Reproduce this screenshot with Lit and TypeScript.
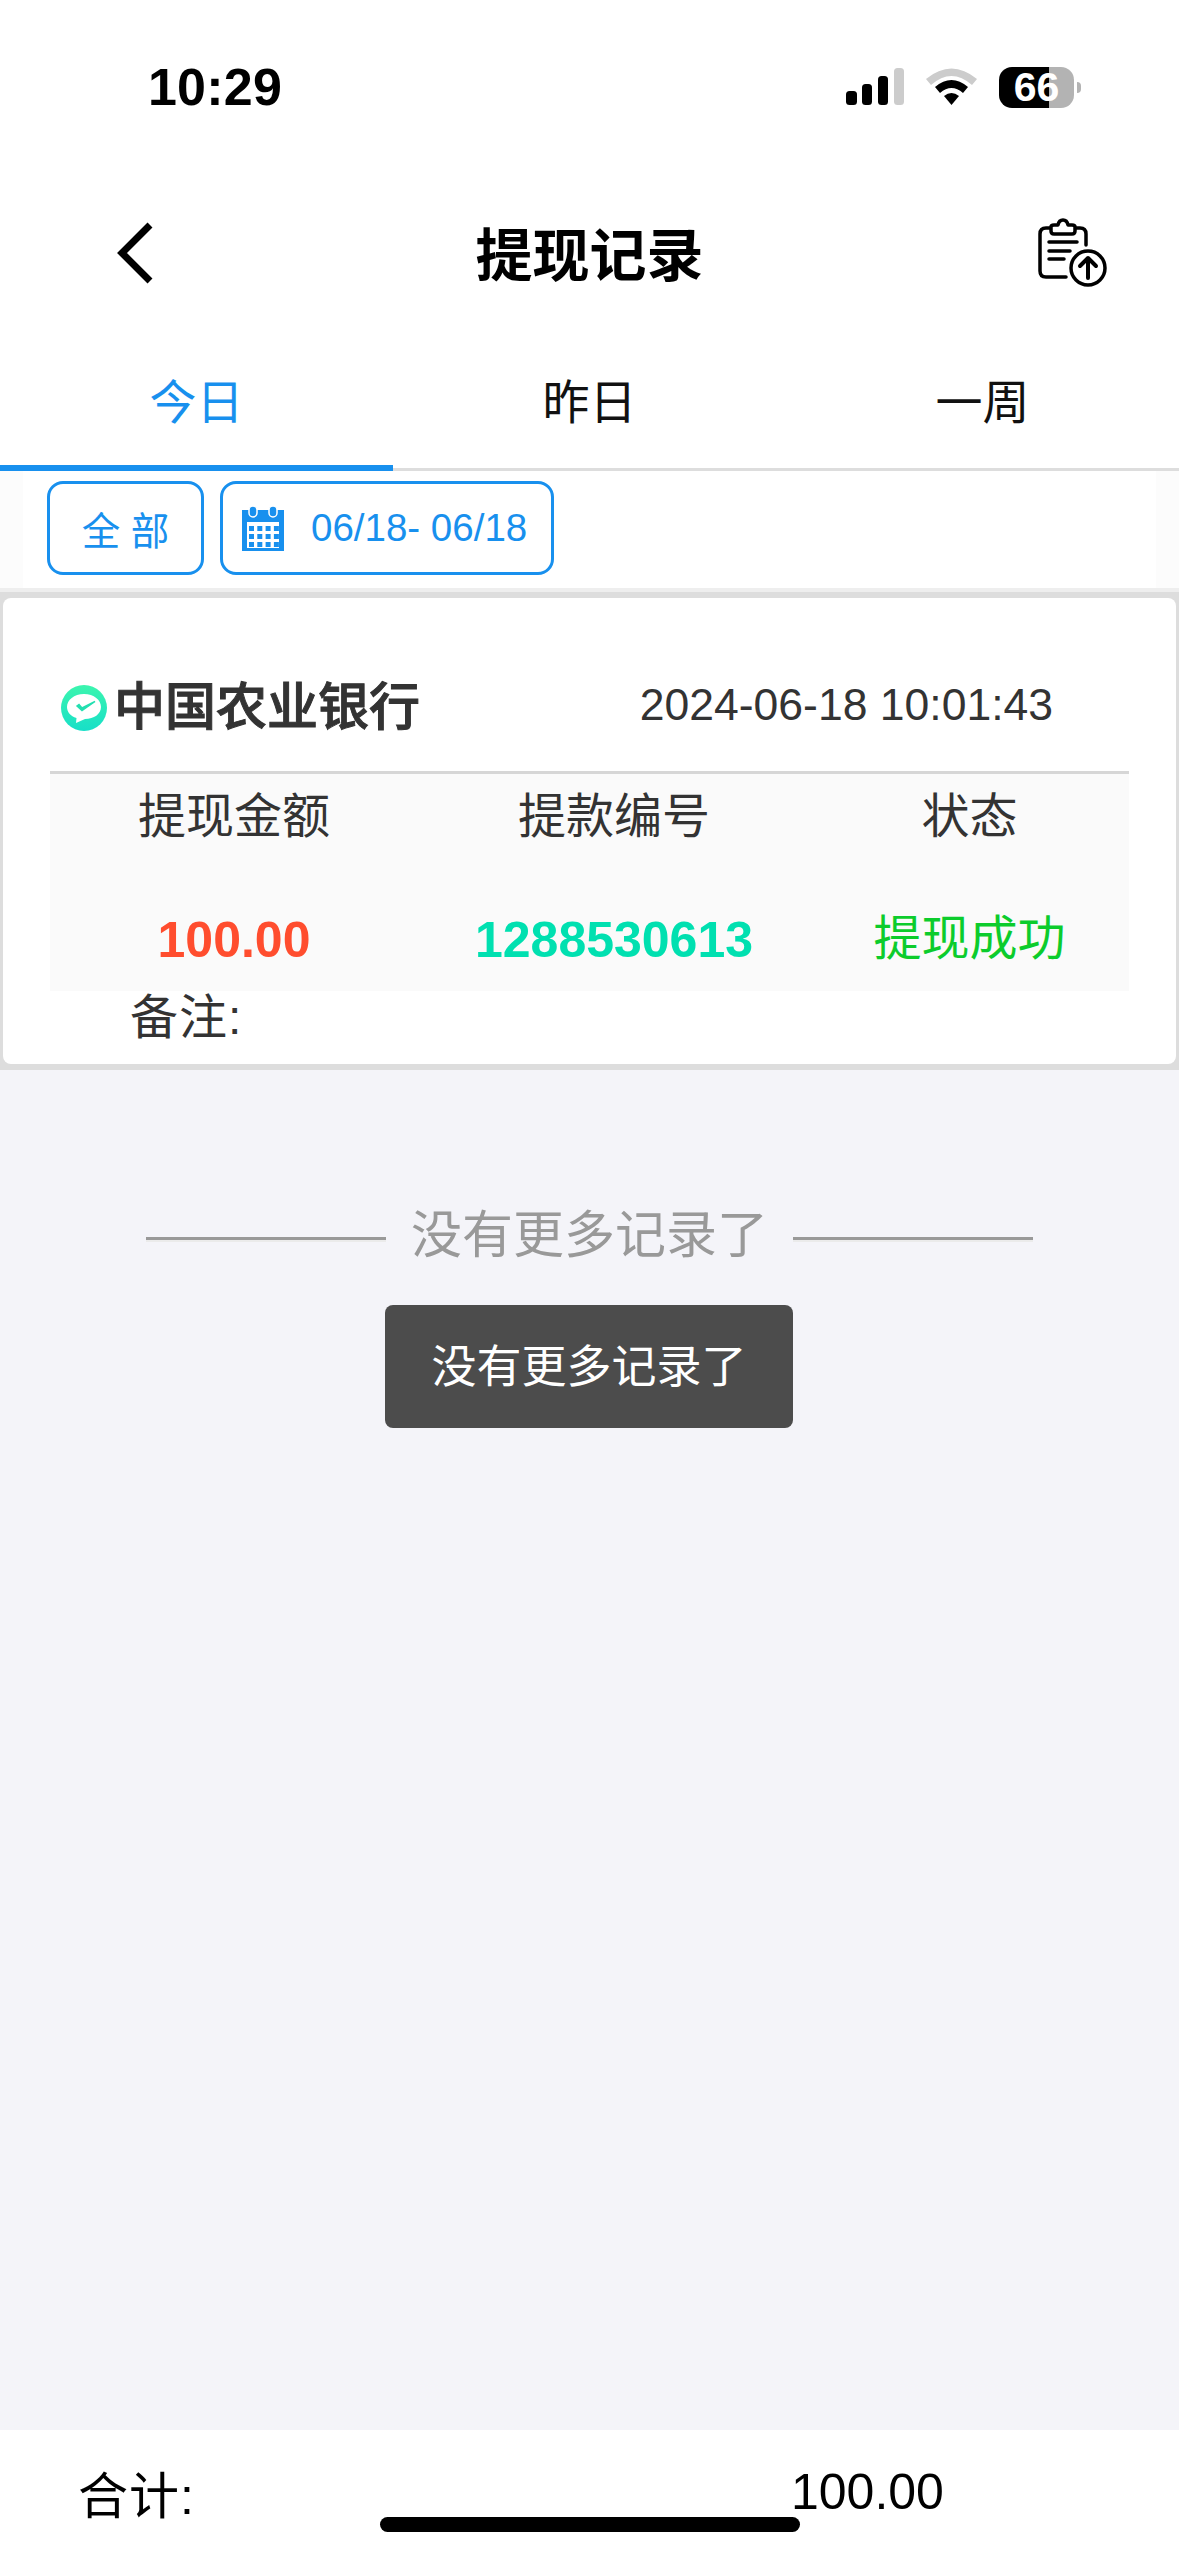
import { LitElement, html, css, svg } from 'lit';
import { customElement, state } from 'lit/decorators.js';

const calendarCells = [0, 1, 2, 3].flatMap((col) =>
	[0, 1, 2].map((row) => svg`<rect x=${7 + col * 8.3} y=${20 + row * 8} width="5" height="5" fill="#1890ee"></rect>`),
);

@customElement('app-root')
export class AppRoot extends LitElement {
	@state() tabs = ['今日', '昨日', '一周'];
	@state() active = 0;

	static styles = css`
		:host {
			--blue: #1890ee;
			display: flex;
			flex-direction: column;
			position: relative;
			width: 1179px;
			height: 2556px;
			background: #f4f4f9;
			overflow: hidden;
			font-family: 'Liberation Sans', 'Noto Sans CJK SC', sans-serif;
			color: #333;
		}
		.status {
			height: 174px;
			background: #fff;
			display: flex;
			align-items: center;
			justify-content: space-between;
			padding: 0 105px 0 148px;
		}
		.time {
			font-size: 52px;
			font-weight: 700;
			letter-spacing: 0.2px;
			color: #000;
			line-height: 60px;
		}
		.status-icons {
			display: flex;
			align-items: center;
			gap: 22px;
		}
		.status-icons svg {
			display: block;
		}
		.battery {
			position: relative;
			width: 75px;
			height: 41px;
			border-radius: 13px;
			background: linear-gradient(90deg, #000 50px, #b3b3b3 50px);
			color: #fff;
			font-size: 41px;
			font-weight: 700;
			line-height: 41px;
			text-align: center;
		}
		.battery::after {
			content: '';
			position: absolute;
			left: 78px;
			top: 15px;
			width: 4px;
			height: 11px;
			border-radius: 0 6px 6px 0;
			background: #b3b3b3;
		}
		.nav {
			height: 158px;
			background: #fff;
			display: grid;
			grid-template-columns: 1fr auto 1fr;
			align-items: center;
			padding: 0 71px;
		}
		.nav h1 {
			margin: 0;
			padding-top: 6px;
			font-size: 57px;
			font-weight: 700;
			color: #000;
			line-height: 70px;
		}
		.nav svg {
			display: block;
		}
		.back {
			margin-left: 44px;
		}
		.upload {
			justify-self: end;
		}
		.tabs {
			height: 139px;
			background: #fff;
			display: grid;
			grid-template-columns: repeat(3, 1fr);
			box-sizing: border-box;
			border-bottom: 3px solid #ddd;
		}
		.tab {
			display: flex;
			align-items: center;
			justify-content: center;
			font-size: 47px;
			color: #111;
			box-sizing: border-box;
			height: 139px;
			border-bottom: 6px solid transparent;
		}
		.tab.on {
			color: var(--blue);
			border-bottom-color: var(--blue);
		}
		.filter {
			height: 121px;
			box-sizing: border-box;
			background: #fcfcfc;
			padding: 0 23px;
			border-bottom: 4px solid #eee;
		}
		.filter-inner {
			height: 117px;
			box-sizing: border-box;
			background: #fff;
			display: flex;
			gap: 16px;
			padding: 10px 24px 0;
		}
		.chip {
			box-sizing: border-box;
			height: 94px;
			border: 3px solid var(--blue);
			border-radius: 16px;
			display: flex;
			align-items: center;
			color: var(--blue);
			font-size: 38.5px;
		}
		.chip.all {
			width: 157px;
			justify-content: center;
		}
		.chip.date {
			width: 334px;
			gap: 27px;
			padding-left: 19px;
		}
		.chip svg {
			display: block;
		}
		.card-wrap {
			box-sizing: border-box;
			height: 478px;
			background: #ddd;
			padding: 6px 3px;
		}
		.card {
			height: 466px;
			background: #fff;
			border-radius: 8px;
			display: flex;
			flex-direction: column;
		}
		.bank {
			height: 173px;
			box-sizing: border-box;
			padding: 80px 123px 0 58px;
			display: flex;
			align-items: flex-start;
			justify-content: space-between;
		}
		.bank-name {
			display: flex;
			align-items: center;
			gap: 7px;
			height: 60px;
			font-size: 51px;
			font-weight: 500;
			-webkit-text-stroke: 1px #333;
			line-height: 54px;
		}
		.bank-time {
			margin-top: 2px;
			font-size: 44.5px;
			line-height: 50px;
		}
		.table {
			margin: 0 47px;
			background: #fafafa;
			border-top: 3px solid #d6d6d6;
			padding-bottom: 1px;
			display: grid;
			grid-template-columns: 368px 392px 1fr;
			grid-template-rows: 76px 100px;
			row-gap: 40px;
			text-align: center;
			align-items: center;
			font-size: 48px;
		}
		.amount {
			font-size: 50px;
			font-weight: 700;
			color: #ff4d2e;
		}
		.serial {
			font-size: 50px;
			font-weight: 700;
			color: #00e0b0;
		}
		.success {
			color: #0ccc2c;
			padding-bottom: 12px;
		}
		.note {
			margin: 3px 0 0 127px;
			font-size: 48px;
			line-height: 48px;
			letter-spacing: 1px;
		}
		.end {
			margin-top: 131px;
			height: 60px;
			display: flex;
			align-items: center;
			justify-content: center;
			gap: 25px;
			color: #999;
			font-size: 51px;
		}
		.end i {
			display: block;
			width: 240px;
			height: 3px;
			margin-top: 16px;
			background: #999;
			border-bottom: 2px solid #ebebeb;
		}
		.toast {
			position: absolute;
			left: 385px;
			top: 1305px;
			width: 408px;
			height: 123px;
			box-sizing: border-box;
			padding-bottom: 6px;
			background: #4c4c4c;
			border-radius: 8px;
			color: #fff;
			font-size: 45px;
			display: flex;
			align-items: center;
			justify-content: center;
		}
		.footer {
			margin-top: auto;
			height: 126px;
			box-sizing: border-box;
			background: #fff;
			display: grid;
			grid-template-columns: 713px auto;
			align-items: center;
			padding: 0 0 2px 78px;
			font-size: 50px;
			color: #000;
		}
		.footer .label {
			letter-spacing: 1px;
		}
		.home {
			position: absolute;
			left: 380px;
			top: 2517px;
			width: 420px;
			height: 15px;
			border-radius: 8px;
			background: #000;
		}
	`;

	renderStatusIcons() {
		return html`<div class="status-icons">
			<svg width="131" height="42" viewBox="846 67 131 42">
				<rect x="846" y="92" width="11" height="14" rx="3.5" fill="#000"></rect>
				<rect x="862" y="85" width="10" height="21" rx="3.5" fill="#000"></rect>
				<rect x="878" y="77" width="10" height="29" rx="3.5" fill="#000"></rect>
				<rect x="894" y="69" width="10" height="37" rx="3.5" fill="#ccc"></rect>
				<path d="M926 80 Q951.5 59 977 80 L972 86 Q951.5 68 931 86 Z" fill="#ccc"></path>
				<path d="M935 88 Q951.5 74 968 88 L963 94 Q951.5 84 940 94 Z" fill="#000"></path>
				<path d="M944 97 Q951.5 91 959 97 L951.5 106 Z" fill="#000"></path>
			</svg>
			<div class="battery">66</div>
		</div>`;
	}

	renderUploadIcon() {
		return html`<svg class="upload" width="70" height="70" viewBox="1038 216 70 70" fill="none" stroke="#000" stroke-width="3.5" stroke-linecap="round" stroke-linejoin="round">
			<path d="M1050 226 H1046 Q1040 226 1040 232 V269 Q1040 275 1046 275 H1066"></path>
			<path d="M1076 226 H1080 Q1086 226 1086 232 V243"></path>
			<path d="M1051 225 Q1051 223 1054 223 H1058 Q1059 218 1063 218 Q1067 218 1068 223 H1072 Q1075 223 1075 225 V229 Q1075 232 1072 232 H1054 Q1051 232 1051 229 Z"></path>
			<path d="M1049 240 H1077 M1049 249 H1070 M1049 257 H1064"></path>
			<circle cx="1088" cy="266" r="17"></circle>
			<path d="M1088 276 V256 M1080 264 L1088 256 L1096 264" stroke-width="4"></path>
		</svg>`;
	}

	render() {
		return html`
			<div class="status">
				<span class="time">10:29</span>
				${this.renderStatusIcons()}
			</div>
			<div class="nav">
				<svg class="back" width="40" height="62" viewBox="0 0 40 62" fill="none" stroke="#000" stroke-width="7">
					<path d="M35 3 L7 31 L35 59"></path>
				</svg>
				<h1>提现记录</h1>
				${this.renderUploadIcon()}
			</div>
			<div class="tabs">
				${this.tabs.map((t, i) => html`<div class="tab ${i === this.active ? 'on' : ''}">${t}</div>`)}
			</div>
			<div class="filter">
				<div class="filter-inner">
					<div class="chip all">全 部</div>
					<div class="chip date">
						<svg width="42" height="45" viewBox="0 0 42 45">
							<path d="M0 4 H42 V45 H0 Z" fill="#1890ee"></path>
							<rect x="5" y="16" width="32" height="26" fill="#fff"></rect>
							${calendarCells}
							<rect x="7" y="0" width="8" height="11" rx="4" fill="#1890ee" stroke="#fff" stroke-width="1.5"></rect>
							<rect x="27" y="0" width="8" height="11" rx="4" fill="#1890ee" stroke="#fff" stroke-width="1.5"></rect>
						</svg>
						<span>06/18- 06/18</span>
					</div>
				</div>
			</div>
			<div class="card-wrap">
				<div class="card">
					<div class="bank">
						<div class="bank-name">
							<svg width="46" height="46" viewBox="0 0 46 46">
								<defs>
									<linearGradient id="g" x1="0" y1="0" x2="0" y2="1">
										<stop offset="0" stop-color="#3cf5ae"></stop>
										<stop offset="1" stop-color="#17dfc8"></stop>
									</linearGradient>
								</defs>
								<circle cx="23" cy="23" r="23" fill="url(#g)"></circle>
								<path d="M23 9 C33 9 40 15 40 22 C40 29 33 34 24 34 L15 38 L15.5 33 C9.5 31 6 27 6 22 C6 15 13 9 23 9 Z" fill="#fff"></path>
								<path d="M16 21 L21 25.5 L34 16.5 L21 23 L18 19.5 Z" fill="#23dfb0" stroke="#23dfb0" stroke-width="1.5"></path>
							</svg>
							<span>中国农业银行</span>
						</div>
						<div class="bank-time">2024-06-18 10:01:43</div>
					</div>
					<div class="table">
						<div>提现金额</div>
						<div>提款编号</div>
						<div>状态</div>
						<div class="amount">100.00</div>
						<div class="serial">1288530613</div>
						<div class="success">提现成功</div>
					</div>
					<div class="note">备注:</div>
				</div>
			</div>
			<div class="end">
				<i></i>
				<span>没有更多记录了</span>
				<i></i>
			</div>
			<div class="toast">没有更多记录了</div>
			<div class="footer">
				<span class="label">合计:</span>
				<span>100.00</span>
			</div>
			<div class="home"></div>
		`;
	}
}
